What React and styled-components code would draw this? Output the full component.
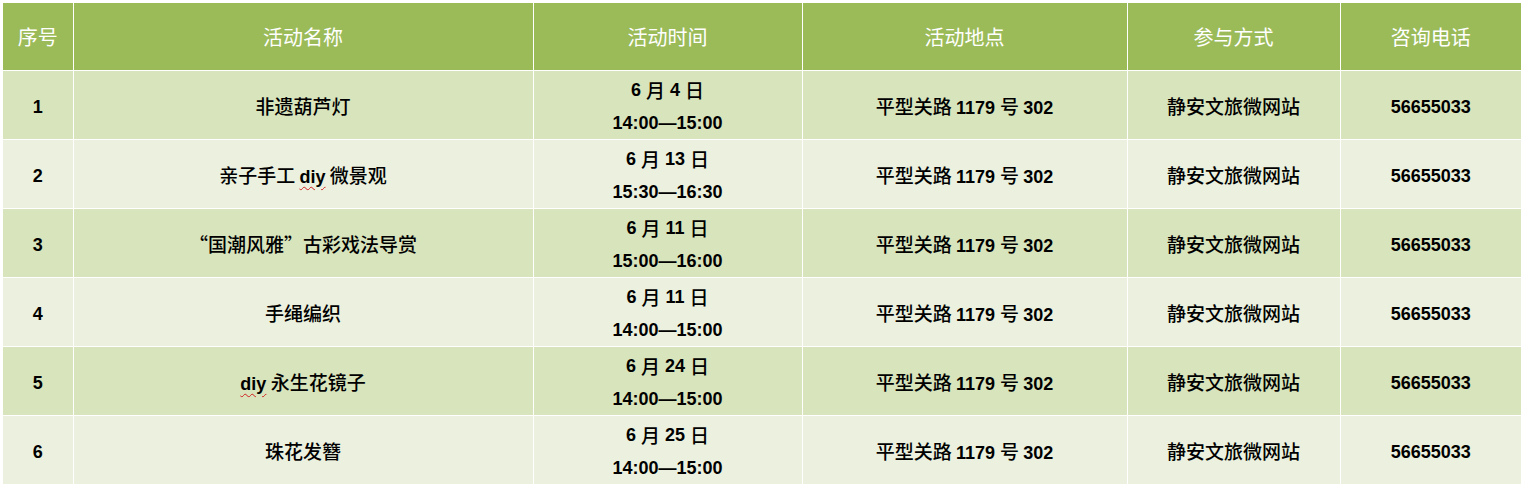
import React from "react";
import styled, { createGlobalStyle } from "styled-components";

const GlobalStyle = createGlobalStyle`
  html, body {
    margin: 0;
    padding: 0;
    background: #ffffff;
  }
  body {
    font-family: "Liberation Sans", "Noto Sans CJK SC", sans-serif;
  }
`;

const Wrap = styled.div`
  padding: 3px 0 0 3px;
`;

const Table = styled.table`
  width: 1518px;
  border-collapse: collapse;
  table-layout: fixed;
`;

const HeadCell = styled.th`
  height: 67px;
  padding: 0;
  background: #9bbb59;
  color: #ffffff;
  font-weight: 400;
  font-size: 20px;
  line-height: 1;
  font-family: "Noto Sans CJK SC", sans-serif;
  text-align: center;
  vertical-align: middle;
  border: 1px solid #ffffff;
  border-top: none;
  &:first-child { border-left: none; }
  &:last-child { border-right: none; }
`;

const Row = styled.tr`
  background: ${(p) => (p.$odd ? "#d8e4bc" : "#ebf1de")};
`;

const Cell = styled.td`
  height: 69px;
  padding: 2px 0 0;
  box-sizing: border-box;
  text-align: center;
  vertical-align: middle;
  color: #000000;
  border: 1px solid #ffffff;
  font-size: 19px;
  line-height: 1;
  font-weight: 500;
  &:first-child { border-left: none; }
  &:last-child { border-right: none; }
`;

const Num = styled.span`
  font-family: "Liberation Sans", sans-serif;
  font-weight: 700;
  font-size: 18px;
`;

const Cjk = styled.span`
  font-family: "Noto Sans CJK SC", sans-serif;
  font-weight: 500;
  font-size: 19px;
`;

const Spell = styled.span`
  font-family: "Liberation Sans", sans-serif;
  font-weight: 700;
  font-size: 18px;
  text-decoration: underline wavy #d02020;
  text-decoration-thickness: 1px;
  text-underline-offset: 3px;
`;

const TimeLine = styled.div`
  height: 33px;
  display: flex;
  align-items: center;
  justify-content: center;
  white-space: pre;
`;

const cols = [70, 460, 269, 325, 213, 181];
const heads = ["序号", "活动名称", "活动时间", "活动地点", "参与方式", "咨询电话"];

const rows = [
  { name: <Cjk>非遗葫芦灯</Cjk>, day: "4", time: "14:00—15:00" },
  {
    name: (
      <>
        <Cjk>亲子手工 </Cjk>
        <Spell>diy</Spell>
        <Cjk> 微景观</Cjk>
      </>
    ),
    day: "13",
    time: "15:30—16:30",
  },
  { name: <Cjk>“国潮风雅”古彩戏法导赏</Cjk>, day: "11", time: "15:00—16:00" },
  { name: <Cjk>手绳编织</Cjk>, day: "11", time: "14:00—15:00" },
  {
    name: (
      <>
        <Spell>diy</Spell>
        <Cjk> 永生花镜子</Cjk>
      </>
    ),
    day: "24",
    time: "14:00—15:00",
  },
  { name: <Cjk>珠花发簪</Cjk>, day: "25", time: "14:00—15:00" },
];

export default function App() {
  return (
    <Wrap>
      <GlobalStyle />
      <Table>
        <colgroup>
          {cols.map((w, i) => (
            <col key={i} style={{ width: w }} />
          ))}
        </colgroup>
        <thead>
          <tr>
            {heads.map((h) => (
              <HeadCell key={h}>{h}</HeadCell>
            ))}
          </tr>
        </thead>
        <tbody>
          {rows.map((r, i) => (
            <Row key={i} $odd={i % 2 === 0}>
              <Cell>
                <Num>{i + 1}</Num>
              </Cell>
              <Cell>{r.name}</Cell>
              <Cell>
                <TimeLine>
                  <Num>6 </Num>
                  <Cjk>月</Cjk>
                  <Num> {r.day} </Num>
                  <Cjk>日</Cjk>
                </TimeLine>
                <TimeLine>
                  <Num>{r.time}</Num>
                </TimeLine>
              </Cell>
              <Cell>
                <Cjk>平型关路 </Cjk>
                <Num>1179 </Num>
                <Cjk>号 </Cjk>
                <Num>302</Num>
              </Cell>
              <Cell>
                <Cjk>静安文旅微网站</Cjk>
              </Cell>
              <Cell>
                <Num>56655033</Num>
              </Cell>
            </Row>
          ))}
        </tbody>
      </Table>
    </Wrap>
  );
}
